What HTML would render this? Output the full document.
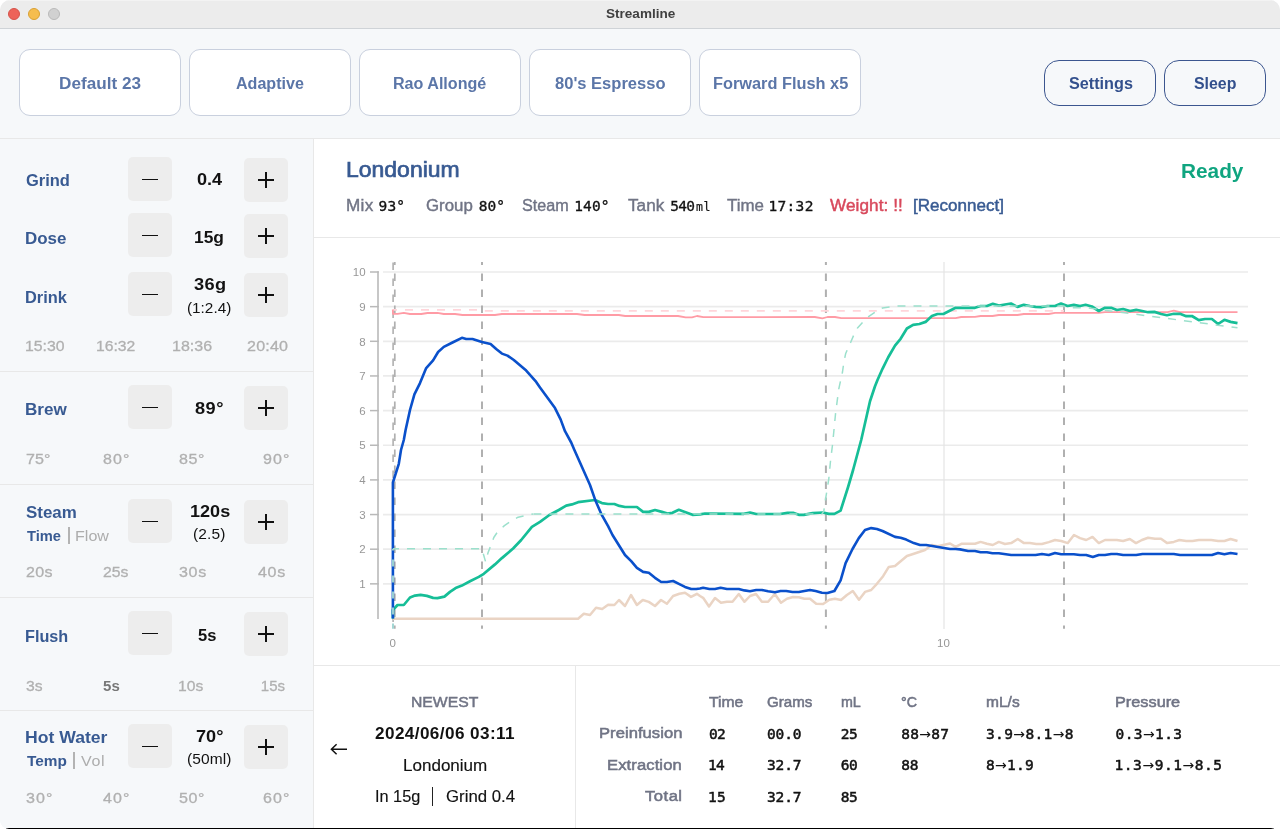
<!DOCTYPE html>
<html lang="en">
<head>
<meta charset="utf-8">
<title>Streamline</title>
<style>
*{box-sizing:border-box;margin:0;padding:0}
html,body{width:1280px;height:829px;overflow:hidden;background:#fff}
body{font-family:"Liberation Sans",sans-serif;position:relative;color:#121212}
.a{position:absolute}
.t{position:absolute;white-space:nowrap}
.m{font-family:"DejaVu Sans Mono","Liberation Mono",monospace}
#win{transform:translateZ(0);position:absolute;left:0;top:0;width:1280px;height:829px;overflow:hidden;border-radius:10px 10px 9px 9px;background:#f6f8fa}
.tl{position:absolute;top:8px;width:12px;height:12px;border-radius:50%}
.pbtn{position:absolute;top:49px;width:162px;height:67px;border:1px solid #c9d0de;border-radius:11px;background:#fff}
.gbtn{position:absolute;top:60px;height:46px;border:1px solid #3c568f;border-radius:15px;background:#f6f8fa}
.pm{position:absolute;width:44px;height:44px;border-radius:5px;background:#ededed}
.pm i{position:absolute;background:#111}
.ar{font-family:"DejaVu Sans",sans-serif;font-size:14px;-webkit-text-stroke:0}
</style>
</head>
<body>
<div id="win">
<div class="a" style="left:0px;top:0px;width:1280px;height:29px;background:#ececec;border-bottom:1px solid #cfd3d7"></div>
<div class="tl" style="left:8px;background:#ed6359;border:1px solid #d5534a"></div>
<div class="tl" style="left:28px;background:#f5bd4f;border:1px solid #d9a033"></div>
<div class="tl" style="left:48px;background:#d1d1d1;border:1px solid #b9b9b9"></div>
<div class="a" style="left:0px;top:0px;width:1280px;height:1px;background:#f3f3f3;"></div>
<div class="t" style="left:605.60px;top:2px;font-size:13px;line-height:24px;font-weight:bold;color:#404040;transform:scaleX(1.0424);transform-origin:0 0;">Streamline</div>
<div class="a" style="left:0px;top:29px;width:1280px;height:110px;background:#f6f8fa;border-bottom:1px solid #e8e8e8"></div>
<div class="pbtn" style="left:19px"></div>
<div class="t" style="left:58.58px;top:72px;font-size:16px;line-height:24px;font-weight:bold;letter-spacing:0.03px;color:#5b76a8;transform:scaleX(1.0700);transform-origin:0 0;">Default 23</div>
<div class="pbtn" style="left:189px"></div>
<div class="t" style="left:235.78px;top:72px;font-size:16px;line-height:24px;font-weight:bold;color:#5b76a8;transform:scaleX(1.0037);transform-origin:0 0;">Adaptive</div>
<div class="pbtn" style="left:359px"></div>
<div class="t" style="left:393.04px;top:72px;font-size:16px;line-height:24px;font-weight:bold;letter-spacing:0.00px;color:#5b76a8;transform:scaleX(1.0054);transform-origin:0 0;">Rao Allongé</div>
<div class="pbtn" style="left:529px"></div>
<div class="t" style="left:554.80px;top:72px;font-size:16px;line-height:24px;font-weight:bold;color:#5b76a8;transform:scaleX(1.0327);transform-origin:0 0;">80&#x27;s Espresso</div>
<div class="pbtn" style="left:699px"></div>
<div class="t" style="left:713.00px;top:72px;font-size:16px;line-height:24px;font-weight:bold;color:#5b76a8;transform:scaleX(1.0210);transform-origin:0 0;">Forward Flush x5</div>
<div class="gbtn" style="left:1044px;width:112px"></div>
<div class="gbtn" style="left:1164px;width:102px"></div>
<div class="t" style="left:1068.80px;top:72px;font-size:16px;line-height:24px;font-weight:bold;color:#33508d;transform:scaleX(1.0127);transform-origin:0 0;">Settings</div>
<div class="t" style="left:1193.95px;top:72px;font-size:16px;line-height:24px;font-weight:bold;color:#33508d;transform:scaleX(0.9930);transform-origin:0 0;">Sleep</div>
<div class="a" style="left:0px;top:139px;width:314px;height:690px;background:#f6f8fa;border-right:1px solid #e8e8e8"></div>
<div class="a" style="left:0px;top:371px;width:313px;height:1px;background:#e8e8e8;"></div>
<div class="a" style="left:0px;top:484px;width:313px;height:1px;background:#e8e8e8;"></div>
<div class="a" style="left:0px;top:597px;width:313px;height:1px;background:#e8e8e8;"></div>
<div class="a" style="left:0px;top:710px;width:313px;height:1px;background:#e8e8e8;"></div>
<div class="pm" style="left:128px;top:157px"><i style="left:14px;top:21.7px;width:16px;height:1.4px"></i></div>
<div class="pm" style="left:244px;top:158px"><i style="left:14px;top:21.2px;width:16px;height:1.4px"></i><i style="left:21.3px;top:13.9px;width:1.4px;height:16px"></i></div>
<div class="t" style="left:25.90px;top:169px;font-size:17px;line-height:24px;font-weight:bold;color:#385a92;transform:scaleX(0.9689);transform-origin:0 0;">Grind</div>
<div class="t" style="left:196.70px;top:168px;font-size:17px;line-height:24px;font-weight:bold;color:#121212;transform:scaleX(1.0667);transform-origin:0 0;">0.4</div>
<div class="pm" style="left:128px;top:213px"><i style="left:14px;top:21.7px;width:16px;height:1.4px"></i></div>
<div class="pm" style="left:244px;top:214px"><i style="left:14px;top:21.2px;width:16px;height:1.4px"></i><i style="left:21.3px;top:13.9px;width:1.4px;height:16px"></i></div>
<div class="t" style="left:24.90px;top:227px;font-size:17px;line-height:24px;font-weight:bold;color:#385a92;transform:scaleX(0.9975);transform-origin:0 0;">Dose</div>
<div class="t" style="left:193.78px;top:226px;font-size:17px;line-height:24px;font-weight:bold;letter-spacing:0.00px;color:#121212;transform:scaleX(1.0214);transform-origin:0 0;">15g</div>
<div class="pm" style="left:128px;top:272px"><i style="left:14px;top:21.7px;width:16px;height:1.4px"></i></div>
<div class="pm" style="left:244px;top:273px"><i style="left:14px;top:21.2px;width:16px;height:1.4px"></i><i style="left:21.3px;top:13.9px;width:1.4px;height:16px"></i></div>
<div class="t" style="left:24.83px;top:286px;font-size:17px;line-height:24px;font-weight:bold;color:#385a92;transform:scaleX(0.9651);transform-origin:0 0;">Drink</div>
<div class="t" style="left:194.05px;top:273px;font-size:17px;line-height:24px;font-weight:bold;letter-spacing:0.34px;color:#121212;transform:scaleX(1.0700);transform-origin:0 0;">36g</div>
<div class="t" style="left:187.24px;top:296px;font-size:14.5px;line-height:24px;color:#121212;transform:scaleX(1.0562);transform-origin:0 0;">(1:2.4)</div>
<div class="pm" style="left:128px;top:385px"><i style="left:14px;top:21.7px;width:16px;height:1.4px"></i></div>
<div class="pm" style="left:244px;top:386px"><i style="left:14px;top:21.2px;width:16px;height:1.4px"></i><i style="left:21.3px;top:13.9px;width:1.4px;height:16px"></i></div>
<div class="t" style="left:24.79px;top:398px;font-size:17px;line-height:24px;font-weight:bold;color:#385a92;transform:scaleX(1.0061);transform-origin:0 0;">Brew</div>
<div class="t" style="left:194.80px;top:397px;font-size:17px;line-height:24px;font-weight:bold;letter-spacing:0.43px;color:#121212;transform:scaleX(1.0700);transform-origin:0 0;">89°</div>
<div class="pm" style="left:128px;top:499px"><i style="left:14px;top:21.7px;width:16px;height:1.4px"></i></div>
<div class="pm" style="left:244px;top:500px"><i style="left:14px;top:21.2px;width:16px;height:1.4px"></i><i style="left:21.3px;top:13.9px;width:1.4px;height:16px"></i></div>
<div class="t" style="left:25.80px;top:501px;font-size:17px;line-height:24px;font-weight:bold;color:#385a92;transform:scaleX(0.9951);transform-origin:0 0;">Steam</div>
<div class="t" style="left:189.74px;top:500px;font-size:17px;line-height:24px;font-weight:bold;color:#121212;transform:scaleX(1.0625);transform-origin:0 0;">120s</div>
<div class="t" style="left:192.98px;top:522px;font-size:14.5px;line-height:24px;letter-spacing:0.13px;color:#121212;transform:scaleX(1.0700);transform-origin:0 0;">(2.5)</div>
<div class="pm" style="left:128px;top:611px"><i style="left:14px;top:21.7px;width:16px;height:1.4px"></i></div>
<div class="pm" style="left:244px;top:612px"><i style="left:14px;top:21.2px;width:16px;height:1.4px"></i><i style="left:21.3px;top:13.9px;width:1.4px;height:16px"></i></div>
<div class="t" style="left:24.85px;top:625px;font-size:17px;line-height:24px;font-weight:bold;color:#385a92;transform:scaleX(0.9545);transform-origin:0 0;">Flush</div>
<div class="t" style="left:198.30px;top:624px;font-size:17px;line-height:24px;font-weight:bold;color:#121212;transform:scaleX(0.9737);transform-origin:0 0;">5s</div>
<div class="pm" style="left:128px;top:724px"><i style="left:14px;top:21.7px;width:16px;height:1.4px"></i></div>
<div class="pm" style="left:244px;top:725px"><i style="left:14px;top:21.2px;width:16px;height:1.4px"></i><i style="left:21.3px;top:13.9px;width:1.4px;height:16px"></i></div>
<div class="t" style="left:24.77px;top:726px;font-size:17px;line-height:24px;font-weight:bold;color:#385a92;transform:scaleX(1.0348);transform-origin:0 0;">Hot Water</div>
<div class="t" style="left:195.80px;top:725px;font-size:17px;line-height:24px;font-weight:bold;color:#121212;transform:scaleX(1.0673);transform-origin:0 0;">70°</div>
<div class="t" style="left:187.23px;top:747px;font-size:14.5px;line-height:24px;letter-spacing:0.08px;color:#121212;transform:scaleX(1.0700);transform-origin:0 0;">(50ml)</div>
<div class="t" style="left:27.30px;top:524px;font-size:15px;line-height:24px;font-weight:bold;color:#385a92;transform:scaleX(0.9786);transform-origin:0 0;">Time</div>
<div class="a" style="left:68.2px;top:527px;width:1.5px;height:17px;background:#b3b3b3;"></div>
<div class="t" style="left:74.73px;top:524px;font-size:15px;line-height:24px;letter-spacing:0.02px;color:#adadad;transform:scaleX(1.0700);transform-origin:0 0;">Flow</div>
<div class="t" style="left:27.30px;top:749px;font-size:15px;line-height:24px;font-weight:bold;color:#385a92;transform:scaleX(1.0256);transform-origin:0 0;">Temp</div>
<div class="a" style="left:73px;top:752px;width:1.5px;height:17px;background:#b3b3b3;"></div>
<div class="t" style="left:80.80px;top:749px;font-size:15px;line-height:24px;letter-spacing:0.63px;color:#adadad;transform:scaleX(1.0700);transform-origin:0 0;">Vol</div>
<div class="t" style="left:24.75px;top:334px;font-size:15px;line-height:24px;letter-spacing:0.00px;color:#b0b0b0;-webkit-text-stroke:0.3px #b0b0b0;transform:scaleX(1.0541);transform-origin:0 0;">15:30</div>
<div class="t" style="left:96.25px;top:334px;font-size:15px;line-height:24px;color:#b0b0b0;-webkit-text-stroke:0.3px #b0b0b0;transform:scaleX(1.0473);transform-origin:0 0;">16:32</div>
<div class="t" style="left:171.73px;top:334px;font-size:15px;line-height:24px;color:#b0b0b0;-webkit-text-stroke:0.3px #b0b0b0;transform:scaleX(1.0676);transform-origin:0 0;">18:36</div>
<div class="t" style="left:247.05px;top:334px;font-size:15px;line-height:24px;letter-spacing:0.20px;color:#b0b0b0;-webkit-text-stroke:0.3px #b0b0b0;transform:scaleX(1.0700);transform-origin:0 0;">20:40</div>
<div class="t" style="left:25.80px;top:447px;font-size:15px;line-height:24px;letter-spacing:0.10px;color:#b0b0b0;-webkit-text-stroke:0.3px #b0b0b0;transform:scaleX(1.0700);transform-origin:0 0;">75°</div>
<div class="t" style="left:102.80px;top:447px;font-size:15px;line-height:24px;letter-spacing:1.03px;color:#b0b0b0;-webkit-text-stroke:0.3px #b0b0b0;transform:scaleX(1.0700);transform-origin:0 0;">80°</div>
<div class="t" style="left:178.80px;top:447px;font-size:15px;line-height:24px;letter-spacing:0.57px;color:#b0b0b0;-webkit-text-stroke:0.3px #b0b0b0;transform:scaleX(1.0700);transform-origin:0 0;">85°</div>
<div class="t" style="left:262.80px;top:447px;font-size:15px;line-height:24px;letter-spacing:1.03px;color:#b0b0b0;-webkit-text-stroke:0.3px #b0b0b0;transform:scaleX(1.0700);transform-origin:0 0;">90°</div>
<div class="t" style="left:25.80px;top:560px;font-size:15px;line-height:24px;letter-spacing:0.27px;color:#b0b0b0;-webkit-text-stroke:0.3px #b0b0b0;transform:scaleX(1.0700);transform-origin:0 0;">20s</div>
<div class="t" style="left:102.80px;top:560px;font-size:15px;line-height:24px;color:#b0b0b0;-webkit-text-stroke:0.3px #b0b0b0;transform:scaleX(1.0521);transform-origin:0 0;">25s</div>
<div class="t" style="left:179.05px;top:560px;font-size:15px;line-height:24px;letter-spacing:0.62px;color:#b0b0b0;-webkit-text-stroke:0.3px #b0b0b0;transform:scaleX(1.0700);transform-origin:0 0;">30s</div>
<div class="t" style="left:257.80px;top:560px;font-size:15px;line-height:24px;letter-spacing:0.62px;color:#b0b0b0;-webkit-text-stroke:0.3px #b0b0b0;transform:scaleX(1.0700);transform-origin:0 0;">40s</div>
<div class="t" style="left:26.05px;top:674px;font-size:15px;line-height:24px;color:#b0b0b0;-webkit-text-stroke:0.3px #b0b0b0;transform:scaleX(1.0469);transform-origin:0 0;">3s</div>
<div class="t" style="left:103.05px;top:674px;font-size:15px;line-height:24px;font-weight:bold;color:#777777;">5s</div>
<div class="t" style="left:177.76px;top:674px;font-size:15px;line-height:24px;color:#b0b0b0;-webkit-text-stroke:0.3px #b0b0b0;transform:scaleX(1.0435);transform-origin:0 0;">10s</div>
<div class="t" style="left:260.80px;top:674px;font-size:15px;line-height:24px;color:#b0b0b0;-webkit-text-stroke:0.3px #b0b0b0;">15s</div>
<div class="t" style="left:25.80px;top:786px;font-size:15px;line-height:24px;letter-spacing:1.03px;color:#b0b0b0;-webkit-text-stroke:0.3px #b0b0b0;transform:scaleX(1.0700);transform-origin:0 0;">30°</div>
<div class="t" style="left:102.80px;top:786px;font-size:15px;line-height:24px;letter-spacing:1.03px;color:#b0b0b0;-webkit-text-stroke:0.3px #b0b0b0;transform:scaleX(1.0700);transform-origin:0 0;">40°</div>
<div class="t" style="left:178.80px;top:786px;font-size:15px;line-height:24px;letter-spacing:0.57px;color:#b0b0b0;-webkit-text-stroke:0.3px #b0b0b0;transform:scaleX(1.0700);transform-origin:0 0;">50°</div>
<div class="t" style="left:262.80px;top:786px;font-size:15px;line-height:24px;letter-spacing:1.03px;color:#b0b0b0;-webkit-text-stroke:0.3px #b0b0b0;transform:scaleX(1.0700);transform-origin:0 0;">60°</div>
<div class="a" style="left:314px;top:139px;width:966px;height:690px;background:#ffffff;"></div>
<div class="a" style="left:314px;top:237px;width:966px;height:1px;background:#e8e8e8;"></div>
<div class="a" style="left:314px;top:665px;width:966px;height:1px;background:#e8e8e8;"></div>
<div class="a" style="left:575px;top:666px;width:1px;height:163px;background:#e8e8e8;"></div>
<div class="t" style="left:345.51px;top:158px;font-size:22px;line-height:24px;color:#385a92;-webkit-text-stroke:0.7px #385a92;transform:scaleX(1.0444);transform-origin:0 0;">Londonium</div>
<div class="t" style="left:1181.31px;top:159px;font-size:21px;line-height:24px;font-weight:bold;color:#10a580;transform:scaleX(0.9903);transform-origin:0 0;">Ready</div>
<div class="t" style="left:345.98px;top:194px;font-size:16px;line-height:24px;letter-spacing:0.27px;color:#707485;-webkit-text-stroke:0.4px #707485;transform:scaleX(1.0700);transform-origin:0 0;">Mix</div>
<div class="t" style="left:426.05px;top:194px;font-size:16px;line-height:24px;letter-spacing:0.00px;color:#707485;-webkit-text-stroke:0.4px #707485;transform:scaleX(1.0511);transform-origin:0 0;">Group</div>
<div class="t" style="left:522.05px;top:194px;font-size:16px;line-height:24px;color:#707485;-webkit-text-stroke:0.4px #707485;transform:scaleX(1.0109);transform-origin:0 0;">Steam</div>
<div class="t" style="left:627.50px;top:194px;font-size:16px;line-height:24px;letter-spacing:0.05px;color:#707485;-webkit-text-stroke:0.4px #707485;transform:scaleX(1.0700);transform-origin:0 0;">Tank</div>
<div class="t" style="left:727.10px;top:194px;font-size:16px;line-height:24px;color:#707485;-webkit-text-stroke:0.4px #707485;transform:scaleX(1.0557);transform-origin:0 0;">Time</div>
<div class="t m" style="left:378.55px;top:194px;font-size:14.5px;line-height:24px;letter-spacing:0.12px;color:#121212;-webkit-text-stroke:0.35px #121212;">93°</div>
<div class="t m" style="left:478.80px;top:194px;font-size:14.5px;line-height:24px;color:#121212;-webkit-text-stroke:0.35px #121212;">80°</div>
<div class="t m" style="left:574.30px;top:194px;font-size:14.5px;line-height:24px;letter-spacing:0.08px;color:#121212;-webkit-text-stroke:0.35px #121212;">140°</div>
<div class="t m" style="left:670.30px;top:194px;font-size:14.5px;line-height:24px;letter-spacing:-0.80px;color:#121212;-webkit-text-stroke:0.35px #121212;">540</div>
<div class="t m" style="left:768.60px;top:194px;font-size:14.5px;line-height:24px;letter-spacing:0.28px;color:#121212;-webkit-text-stroke:0.35px #121212;">17:32</div>
<div class="t m" style="left:695.90px;top:195px;font-size:11.5px;line-height:24px;letter-spacing:0.80px;color:#121212;-webkit-text-stroke:0.2px #121212;">ml</div>
<div class="t" style="left:830.00px;top:194px;font-size:16px;line-height:24px;letter-spacing:0.08px;color:#d8495c;-webkit-text-stroke:0.45px #d8495c;transform:scaleX(1.0700);transform-origin:0 0;">Weight: !!</div>
<div class="t" style="left:912.80px;top:194px;font-size:16px;line-height:24px;color:#385a92;-webkit-text-stroke:0.45px #385a92;transform:scaleX(1.0647);transform-origin:0 0;">[Reconnect]</div>
<div class="t" style="left:410.78px;top:690px;font-size:15.5px;line-height:24px;color:#707485;-webkit-text-stroke:0.5px #707485;transform:scaleX(1.0152);transform-origin:0 0;">NEWEST</div>
<div class="t" style="left:375.05px;top:722px;font-size:16px;line-height:24px;font-weight:bold;letter-spacing:0.39px;color:#121212;transform:scaleX(1.0700);transform-origin:0 0;">2024/06/06 03:11</div>
<div class="t" style="left:402.74px;top:754px;font-size:16px;line-height:24px;color:#121212;-webkit-text-stroke:0.15px #121212;transform:scaleX(1.0641);transform-origin:0 0;">Londonium</div>
<div class="t" style="left:374.53px;top:785px;font-size:16px;line-height:24px;color:#121212;-webkit-text-stroke:0.15px #121212;transform:scaleX(1.0174);transform-origin:0 0;">In 15g</div>
<div class="a" style="left:431.8px;top:787px;width:1.5px;height:18.5px;background:#222;"></div>
<div class="t" style="left:445.55px;top:785px;font-size:16px;line-height:24px;color:#121212;-webkit-text-stroke:0.15px #121212;transform:scaleX(1.0492);transform-origin:0 0;">Grind 0.4</div>
<svg class="a" style="left:328px;top:741px" width="22" height="16" viewBox="0 0 22 16"><path d="M19 8.2H3.6M8.6 3.2L3.4 8.2L8.6 13.2" fill="none" stroke="#111" stroke-width="1.5" stroke-linecap="butt" stroke-linejoin="miter"/></svg>
<div class="t" style="left:708.80px;top:690px;font-size:15.5px;line-height:24px;color:#707485;-webkit-text-stroke:0.55px #707485;transform:scaleX(1.0147);transform-origin:0 0;">Time</div>
<div class="t" style="left:767.05px;top:690px;font-size:15.5px;line-height:24px;color:#707485;-webkit-text-stroke:0.55px #707485;transform:scaleX(0.9734);transform-origin:0 0;">Grams</div>
<div class="t" style="left:840.80px;top:690px;font-size:15.5px;line-height:24px;letter-spacing:-0.26px;color:#707485;-webkit-text-stroke:0.55px #707485;transform:scaleX(0.9200);transform-origin:0 0;">mL</div>
<div class="t" style="left:901.30px;top:690px;font-size:15.5px;line-height:24px;letter-spacing:-0.07px;color:#707485;-webkit-text-stroke:0.55px #707485;transform:scaleX(0.9200);transform-origin:0 0;">°C</div>
<div class="t" style="left:985.90px;top:690px;font-size:15.5px;line-height:24px;color:#707485;-webkit-text-stroke:0.55px #707485;transform:scaleX(1.0029);transform-origin:0 0;">mL/s</div>
<div class="t" style="left:1114.55px;top:690px;font-size:15.5px;line-height:24px;color:#707485;-webkit-text-stroke:0.55px #707485;transform:scaleX(1.0508);transform-origin:0 0;">Pressure</div>
<div class="t" style="left:598.73px;top:721px;font-size:15.5px;line-height:24px;letter-spacing:0.04px;color:#707485;-webkit-text-stroke:0.55px #707485;transform:scaleX(1.0700);transform-origin:0 0;">Preinfusion</div>
<div class="t" style="left:606.73px;top:753px;font-size:15.5px;line-height:24px;letter-spacing:0.10px;color:#707485;-webkit-text-stroke:0.55px #707485;transform:scaleX(1.0700);transform-origin:0 0;">Extraction</div>
<div class="t" style="left:645.30px;top:784px;font-size:15.5px;line-height:24px;letter-spacing:0.47px;color:#707485;-webkit-text-stroke:0.55px #707485;transform:scaleX(1.0700);transform-origin:0 0;">Total</div>
<div class="t m" style="left:709.05px;top:722px;font-size:14.5px;line-height:24px;letter-spacing:-0.75px;color:#121212;-webkit-text-stroke:0.5px #121212;">02</div>
<div class="t m" style="left:767.05px;top:722px;font-size:14.5px;line-height:24px;letter-spacing:-0.17px;color:#121212;-webkit-text-stroke:0.5px #121212;">00.0</div>
<div class="t m" style="left:840.80px;top:722px;font-size:14.5px;line-height:24px;letter-spacing:-0.50px;color:#121212;-webkit-text-stroke:0.5px #121212;">25</div>
<div class="t m" style="left:901.30px;top:722px;font-size:14.5px;line-height:24px;letter-spacing:0.28px;color:#121212;-webkit-text-stroke:0.5px #121212;">88<span class="ar">→</span>87</div>
<div class="t m" style="left:985.90px;top:722px;font-size:14.5px;line-height:24px;letter-spacing:0.39px;color:#121212;-webkit-text-stroke:0.5px #121212;">3.9<span class="ar">→</span>8.1<span class="ar">→</span>8</div>
<div class="t m" style="left:1115.60px;top:722px;font-size:14.5px;line-height:24px;letter-spacing:0.38px;color:#121212;-webkit-text-stroke:0.5px #121212;">0.3<span class="ar">→</span>1.3</div>
<div class="t m" style="left:708.05px;top:753px;font-size:14.5px;line-height:24px;letter-spacing:-0.75px;color:#121212;-webkit-text-stroke:0.5px #121212;">14</div>
<div class="t m" style="left:767.05px;top:753px;font-size:14.5px;line-height:24px;letter-spacing:-0.17px;color:#121212;-webkit-text-stroke:0.5px #121212;">32.7</div>
<div class="t m" style="left:840.80px;top:753px;font-size:14.5px;line-height:24px;letter-spacing:-0.50px;color:#121212;-webkit-text-stroke:0.5px #121212;">60</div>
<div class="t m" style="left:901.30px;top:753px;font-size:14.5px;line-height:24px;letter-spacing:-0.40px;color:#121212;-webkit-text-stroke:0.5px #121212;">88</div>
<div class="t m" style="left:985.90px;top:753px;font-size:14.5px;line-height:24px;letter-spacing:0.29px;color:#121212;-webkit-text-stroke:0.5px #121212;">8<span class="ar">→</span>1.9</div>
<div class="t m" style="left:1114.60px;top:753px;font-size:14.5px;line-height:24px;letter-spacing:0.53px;color:#121212;-webkit-text-stroke:0.5px #121212;">1.3<span class="ar">→</span>9.1<span class="ar">→</span>8.5</div>
<div class="t m" style="left:708.05px;top:785px;font-size:14.5px;line-height:24px;letter-spacing:0.25px;color:#121212;-webkit-text-stroke:0.5px #121212;">15</div>
<div class="t m" style="left:767.05px;top:785px;font-size:14.5px;line-height:24px;letter-spacing:-0.17px;color:#121212;-webkit-text-stroke:0.5px #121212;">32.7</div>
<div class="t m" style="left:840.80px;top:785px;font-size:14.5px;line-height:24px;letter-spacing:-0.50px;color:#121212;-webkit-text-stroke:0.5px #121212;">85</div>
<svg class="a" style="left:0;top:0" width="1280" height="829" viewBox="0 0 1280 829"><style>.ax{font-family:"Liberation Sans",sans-serif;font-size:11.5px;fill:#979797}</style><line x1="383" y1="583.85" x2="1248" y2="583.85" stroke="#ebebeb" stroke-width="1.7"/><line x1="383" y1="549.20" x2="1248" y2="549.20" stroke="#ebebeb" stroke-width="1.7"/><line x1="383" y1="514.55" x2="1248" y2="514.55" stroke="#ebebeb" stroke-width="1.7"/><line x1="383" y1="479.90" x2="1248" y2="479.90" stroke="#ebebeb" stroke-width="1.7"/><line x1="383" y1="445.25" x2="1248" y2="445.25" stroke="#ebebeb" stroke-width="1.7"/><line x1="383" y1="410.60" x2="1248" y2="410.60" stroke="#ebebeb" stroke-width="1.7"/><line x1="383" y1="375.95" x2="1248" y2="375.95" stroke="#ebebeb" stroke-width="1.7"/><line x1="383" y1="341.30" x2="1248" y2="341.30" stroke="#ebebeb" stroke-width="1.7"/><line x1="383" y1="306.65" x2="1248" y2="306.65" stroke="#ebebeb" stroke-width="1.7"/><line x1="383" y1="272.00" x2="1248" y2="272.00" stroke="#ebebeb" stroke-width="1.7"/><line x1="944" y1="262" x2="944" y2="629" stroke="#e4e4e4" stroke-width="1.2"/><line x1="378" y1="271.2" x2="378" y2="619" stroke="#b9b9b9" stroke-width="1.6"/><line x1="370" y1="583.85" x2="378.8" y2="583.85" stroke="#b9b9b9" stroke-width="1.5"/><line x1="370" y1="549.20" x2="378.8" y2="549.20" stroke="#b9b9b9" stroke-width="1.5"/><line x1="370" y1="514.55" x2="378.8" y2="514.55" stroke="#b9b9b9" stroke-width="1.5"/><line x1="370" y1="479.90" x2="378.8" y2="479.90" stroke="#b9b9b9" stroke-width="1.5"/><line x1="370" y1="445.25" x2="378.8" y2="445.25" stroke="#b9b9b9" stroke-width="1.5"/><line x1="370" y1="410.60" x2="378.8" y2="410.60" stroke="#b9b9b9" stroke-width="1.5"/><line x1="370" y1="375.95" x2="378.8" y2="375.95" stroke="#b9b9b9" stroke-width="1.5"/><line x1="370" y1="341.30" x2="378.8" y2="341.30" stroke="#b9b9b9" stroke-width="1.5"/><line x1="370" y1="306.65" x2="378.8" y2="306.65" stroke="#b9b9b9" stroke-width="1.5"/><line x1="370" y1="272.00" x2="378.8" y2="272.00" stroke="#b9b9b9" stroke-width="1.5"/><line x1="393.1" y1="262" x2="393.1" y2="628.75" stroke="#b0b0b0" stroke-width="1.6" stroke-dasharray="7.5 8.5" stroke-dashoffset="15.5"/><line x1="394.8" y1="262" x2="394.8" y2="628.75" stroke="#b0b0b0" stroke-width="1.7" stroke-dasharray="7.5 8.5" stroke-dashoffset="4.5"/><line x1="482" y1="262" x2="482" y2="628.75" stroke="#b0b0b0" stroke-width="2" stroke-dasharray="7.5 8.5" stroke-dashoffset="4.5"/><line x1="825.9" y1="262" x2="825.9" y2="628.75" stroke="#b0b0b0" stroke-width="2" stroke-dasharray="7.5 8.5" stroke-dashoffset="4.5"/><line x1="1064" y1="262" x2="1064" y2="628.75" stroke="#b0b0b0" stroke-width="2" stroke-dasharray="7.5 8.5" stroke-dashoffset="4.5"/><polyline points="393.0,309.8 478.0,309.8 481.0,310.9 1064.0,310.9" fill="none" stroke="#ffd5da" stroke-width="1.8" stroke-linejoin="round" stroke-linecap="butt" stroke-dasharray="8 8" stroke-dashoffset="4"/><polyline points="393.0,618.7 578.1,618.7 583.8,613.8 590.0,615.0 596.0,607.8 602.2,609.0 608.1,604.8 614.4,605.0 619.0,600.0 625.0,606.0 631.0,595.0 636.9,605.0 642.8,600.0 648.8,601.9 655.0,606.0 661.0,600.0 666.9,603.8 673.1,596.0 679.4,593.8 685.0,592.8 691.0,596.9 696.9,593.8 700.0,596.0 703.1,597.8 709.0,606.5 715.0,598.1 721.0,602.8 726.9,601.8 732.5,601.8 738.8,594.0 744.4,601.8 750.0,596.0 756.0,594.0 761.9,601.8 768.1,601.8 774.8,594.0 781.0,602.8 786.9,598.8 793.1,597.0 798.8,597.2 804.4,598.8 810.0,598.8 816.2,603.8 823.1,604.0 829.4,599.8 835.0,598.8 841.0,600.0 846.9,595.0 852.8,591.0 859.0,599.8 865.0,591.9 871.2,590.0 876.9,583.8 883.1,576.2 888.8,566.9 895.0,566.0 906.9,556.0 913.1,554.0 925.0,550.0 931.9,545.0 937.5,546.2 950.0,543.5 955.6,546.9 961.9,543.7 975.0,543.8 980.6,541.9 986.9,543.8 992.8,545.0 998.8,541.9 1005.0,544.0 1011.2,543.1 1017.8,539.0 1024.0,543.1 1030.0,543.1 1036.2,544.0 1041.9,544.0 1048.8,542.1 1055.0,540.0 1061.2,541.0 1067.8,543.1 1074.0,535.0 1080.0,538.1 1086.2,540.0 1092.5,536.9 1098.8,543.1 1105.0,540.0 1116.9,540.0 1123.1,541.0 1129.8,539.0 1136.0,543.1 1141.9,540.0 1148.1,537.8 1155.0,538.8 1161.0,538.8 1167.2,543.1 1173.8,541.9 1179.4,540.0 1186.2,541.0 1192.5,541.0 1198.8,540.0 1211.2,540.0 1218.1,541.0 1224.4,541.0 1230.6,539.0 1237.5,541.0" fill="none" stroke="#ead4c4" stroke-width="2.5" stroke-linejoin="round" stroke-linecap="butt" /><polyline points="392.8,309.5 393.0,313.9 397.5,313.9 403.8,312.9 410.0,314.0 421.2,314.0 427.5,313.0 437.5,312.9 443.8,314.0 455.0,314.0 462.5,315.0 495.0,315.0 501.9,314.0 577.0,314.0 584.6,315.0 618.8,315.0 625.2,316.0 678.0,316.0 685.6,317.4 692.0,317.4 697.0,316.0 703.3,317.2 814.8,317.0 822.4,318.3 827.5,317.0 835.0,317.0 841.2,318.1 955.6,318.1 961.2,317.0 975.0,316.9 980.6,316.0 992.5,316.0 998.8,315.0 1017.5,315.0 1023.8,314.0 1048.8,314.0 1055.0,312.9 1098.8,312.9 1105.0,312.1 1167.5,312.1 1173.8,310.6 1180.0,312.1 1237.5,312.1" fill="none" stroke="#ff9ba5" stroke-width="1.8" stroke-linejoin="round" stroke-linecap="butt" /><polyline points="392.9,618.5 392.9,610.0 397.5,605.0 403.8,605.0 410.0,597.5 415.0,595.6 420.6,594.8 426.9,595.9 433.1,597.9 437.5,598.1 444.4,596.6 450.0,591.9 455.6,588.1 461.9,585.6 470.0,581.2 478.8,576.9 483.8,573.8 495.0,564.4 501.9,558.1 513.1,548.5 521.2,540.0 531.9,526.9 540.0,521.9 549.4,515.0 558.8,510.0 566.2,505.6 571.9,504.4 578.1,502.2 595.0,500.0 601.9,503.1 608.1,504.0 614.4,504.0 619.4,505.9 625.0,507.0 636.9,507.0 643.1,511.9 648.8,511.9 655.0,510.0 661.9,511.9 667.5,513.5 672.5,512.8 678.8,509.8 685.6,512.2 692.5,514.8 700.0,514.4 705.0,513.5 743.8,513.8 750.0,512.5 756.2,514.0 780.0,514.0 787.5,512.8 793.1,512.8 798.8,514.8 803.8,514.8 812.5,513.2 823.1,512.5 828.8,513.9 834.4,513.9 840.6,510.6 848.1,487.0 853.1,470.0 861.2,440.0 870.0,401.2 875.0,386.2 877.5,380.0 882.5,368.8 888.1,357.5 895.0,345.6 900.6,338.8 906.9,328.5 913.1,324.8 919.4,324.0 925.6,321.9 931.9,316.0 937.5,314.0 943.8,313.8 955.6,307.8 975.0,307.8 980.6,306.0 986.9,306.0 992.8,303.8 999.0,305.6 1005.0,304.5 1011.0,303.5 1017.5,306.9 1023.8,304.8 1030.0,306.0 1035.6,306.9 1041.2,307.1 1047.5,306.0 1055.0,306.0 1061.0,303.5 1067.5,306.0 1073.8,304.8 1080.0,306.0 1085.6,304.8 1091.9,306.5 1098.8,311.0 1105.0,307.8 1111.2,307.8 1116.9,310.0 1123.1,309.0 1130.0,311.0 1136.2,309.8 1148.1,312.2 1154.4,311.9 1161.2,314.0 1166.9,315.2 1173.8,313.8 1180.0,313.8 1186.2,316.2 1191.9,316.0 1198.8,320.2 1205.0,319.0 1211.9,319.0 1218.1,324.0 1224.4,319.8 1230.6,321.9 1237.5,323.1" fill="none" stroke="#16be97" stroke-width="2.7" stroke-linejoin="round" stroke-linecap="butt" /><polyline points="392.9,618.5 392.9,482.5 398.8,463.8 401.0,450.0 403.8,440.0 405.6,430.0 410.0,410.0 414.4,394.4 420.0,383.1 426.2,368.1 433.1,360.3 438.1,352.0 443.8,346.9 452.5,342.5 461.9,337.8 466.2,339.0 472.5,339.0 481.9,341.9 490.6,344.0 496.2,349.0 501.9,353.6 507.5,355.6 513.8,360.0 526.2,370.6 536.2,381.9 540.0,387.5 555.0,408.1 560.6,419.4 565.0,431.2 571.2,442.5 574.4,450.0 590.0,485.0 595.0,499.4 601.2,513.8 608.1,526.2 612.5,535.0 625.0,555.0 631.2,561.2 636.9,567.8 643.1,571.9 648.8,572.8 655.0,577.8 661.2,582.0 666.9,582.0 673.1,581.0 679.4,584.1 685.0,586.9 691.2,589.0 696.2,589.0 700.0,588.5 703.1,587.8 709.4,589.0 715.0,589.0 720.6,587.8 726.9,589.0 738.8,589.0 744.4,590.4 750.0,591.2 756.2,590.0 761.9,590.0 768.1,591.2 775.0,592.2 780.6,591.0 786.2,591.0 792.5,592.0 798.8,592.0 804.4,591.0 810.0,590.0 815.6,591.0 821.9,592.8 827.5,593.0 834.4,591.0 840.6,580.3 845.6,563.1 852.5,549.0 858.8,538.1 865.0,530.0 871.2,528.1 876.9,529.0 882.5,531.0 895.0,536.9 900.6,537.8 906.2,539.6 913.8,543.1 920.0,545.0 926.2,545.0 950.0,549.0 955.6,549.0 960.0,549.4 968.1,551.0 975.0,551.0 980.6,552.2 986.9,552.2 992.5,553.2 998.8,553.2 1011.2,555.0 1035.6,555.0 1041.9,554.0 1048.8,555.0 1055.0,553.0 1061.2,554.2 1073.8,554.2 1080.0,555.0 1086.2,555.0 1092.8,557.0 1098.8,555.0 1105.0,555.0 1111.2,554.0 1116.9,554.0 1123.1,555.0 1136.2,555.0 1142.5,554.0 1173.8,554.0 1180.0,555.0 1211.9,555.0 1218.1,553.0 1224.4,554.2 1230.6,553.0 1237.5,554.0" fill="none" stroke="#0a50cb" stroke-width="2.6" stroke-linejoin="round" stroke-linecap="butt" /><polyline points="393.0,548.8 481.9,548.8 485.6,561.9 488.1,552.5 490.6,546.2 493.8,537.5 497.5,531.9 504.4,525.6 510.6,521.5 518.1,517.2 525.6,515.6 533.0,514.0" fill="none" stroke="#9be0cc" stroke-width="1.5" stroke-linejoin="round" stroke-linecap="butt" stroke-dasharray="8 8" stroke-dashoffset="2"/><polyline points="533.0,514.0 822.0,514.0" fill="none" stroke="#9be0cc" stroke-width="1.5" stroke-linejoin="round" stroke-linecap="butt" stroke-dasharray="8 8" stroke-dashoffset="15.6"/><polyline points="822.0,514.0 823.8,511.2 825.6,498.8 828.8,478.8 830.6,460.0 832.5,445.0 835.6,413.1 838.8,388.8 842.5,372.0 843.8,362.5 845.6,353.8 848.1,348.0 850.6,342.5 853.8,335.0 857.5,328.0 862.5,322.5 868.1,316.9 875.0,312.2 882.5,308.0 890.0,307.0 897.0,306.0 1064.0,306.0 1066.0,307.8 1087.0,307.8 1237.5,327.8" fill="none" stroke="#9be0cc" stroke-width="1.5" stroke-linejoin="round" stroke-linecap="butt" stroke-dasharray="8 8" stroke-dashoffset="1.8"/><line x1="393" y1="548.75" x2="393" y2="628.75" stroke="#9fd6d3" stroke-width="1.9" stroke-dasharray="7 9" stroke-dashoffset="5.35"/><text x="365.6" y="588.05" text-anchor="end" class="ax">1</text><text x="365.6" y="553.40" text-anchor="end" class="ax">2</text><text x="365.6" y="518.75" text-anchor="end" class="ax">3</text><text x="365.6" y="484.10" text-anchor="end" class="ax">4</text><text x="365.6" y="449.45" text-anchor="end" class="ax">5</text><text x="365.6" y="414.80" text-anchor="end" class="ax">6</text><text x="365.6" y="380.15" text-anchor="end" class="ax">7</text><text x="365.6" y="345.50" text-anchor="end" class="ax">8</text><text x="365.6" y="310.85" text-anchor="end" class="ax">9</text><text x="365.6" y="276.20" text-anchor="end" class="ax">10</text><text x="392.8" y="647" text-anchor="middle" class="ax">0</text><text x="943.5" y="647" text-anchor="middle" class="ax">10</text></svg>
<div class="a" style="left:6px;top:828px;width:1268px;height:1px;background:#000;"></div>
</div>
</body>
</html>
